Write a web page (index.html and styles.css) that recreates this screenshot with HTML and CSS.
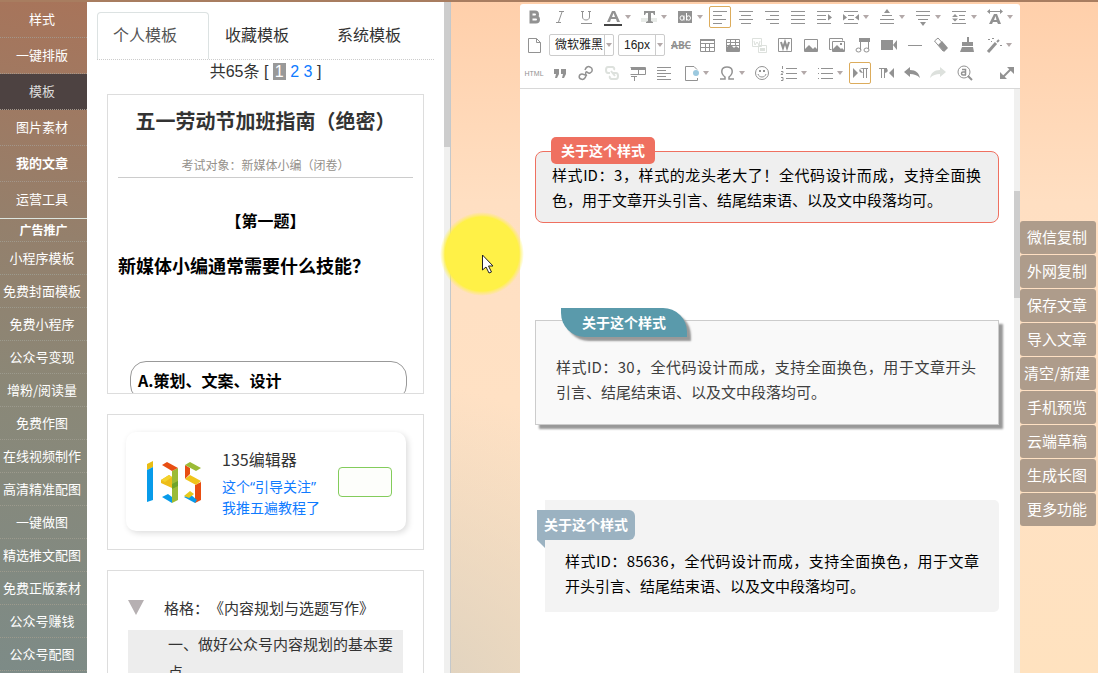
FILE: index.html
```html
<!DOCTYPE html>
<html lang="zh-CN">
<head>
  <meta charset="UTF-8">
  <meta name="viewport" content="width=device-width, initial-scale=1.0">
  <title>135编辑器</title>
  <link rel="stylesheet" href="styles.css">
</head>
<body>
  <div class="app">
    <nav class="sidebar">
      <ul class="menu">
        <li><a href="#">样式</a></li>
        <li><a href="#">一键排版</a></li>
        <li class="active"><a href="#">模板</a></li>
        <li><a href="#">图片素材</a></li>
        <li class="strong"><a href="#">我的文章</a></li>
        <li><a href="#">运营工具</a></li>
      </ul>
      <h2 class="promo-title">广告推广</h2>
      <ul class="promo">
        <li><a href="#">小程序模板</a></li>
        <li><a href="#">免费封面模板</a></li>
        <li><a href="#">免费小程序</a></li>
        <li><a href="#">公众号变现</a></li>
        <li><a href="#">增粉/阅读量</a></li>
        <li><a href="#">免费作图</a></li>
        <li><a href="#">在线视频制作</a></li>
        <li><a href="#">高清精准配图</a></li>
        <li><a href="#">一键做图</a></li>
        <li><a href="#">精选推文配图</a></li>
        <li><a href="#">免费正版素材</a></li>
        <li><a href="#">公众号赚钱</a></li>
        <li><a href="#">公众号配图</a></li>
      </ul>
    </nav>

    <section class="panel">
      <div class="panel-body">
        <div class="tabs">
          <a class="tab current" href="#">个人模板</a>
          <a class="tab" href="#">收藏模板</a>
          <a class="tab" href="#">系统模板</a>
        </div>
        <p class="pager">共65条 [ <span class="page-now">1</span> <a href="#">2</a> <a href="#">3</a> ]</p>

        <article class="card exam">
          <h1>五一劳动节加班指南（绝密）</h1>
          <p class="exam-sub">考试对象：新媒体小编（闭卷）</p>
          <p class="exam-no">【第一题】</p>
          <p class="exam-question">新媒体小编通常需要什么技能？</p>
          <p class="exam-option">A.策划、文案、设计</p>
        </article>

        <article class="card follow">
          <div class="follow-box">
            <svg class="logo" viewBox="0 0 56 44" aria-hidden="true">
              <path fill="#e9bd13" d="M1 4l6-3v6l-6 3z"/>
              <path fill="#079bea" d="M1 10l6-3v33l-6 2z"/>
              <path fill="#9bbb36" d="M26 11l6-3v32l-6 3z"/>
              <path fill="#e84e12" d="M16 5l5-3 11 6-6 3z"/>
              <path fill="#edbd18" d="M15 20l8-5 3 2v11l-11-5z"/>
              <path fill="#f3d22c" d="M15 20l8-5 3 2-7 5z"/>
              <path fill="#6fa329" d="M26 24l6-3v5l-6 3z"/>
              <path fill="#079bea" d="M16 37l6-3 4 3v6z"/>
              <path fill="#e84e12" d="M39 5l5 3v6l-5 5z"/>
              <path fill="#9bbb36" d="M39 5l5-3 11 6-5 3z"/>
              <path fill="#e84e12" d="M49 25l6-3v18l-6 3z"/>
              <path fill="#f0c41b" d="M39 19l5-4 11 6-5 4z"/>
              <path fill="#079bea" d="M38 37l6-3 7 6-2 3z"/>
              <path fill="#e5c91c" d="M38 36l6-5 4 3-5 4z"/>
            </svg>
            <div class="follow-text">
              <strong>135编辑器</strong>
              <a href="#">这个“引导关注”<br>我推五遍教程了</a>
            </div>
            <button class="follow-btn" type="button" aria-label="关注"></button>
          </div>
        </article>

        <article class="card outline">
          <h3>格格：《内容规划与选题写作》</h3>
          <p>一、做好公众号内容规划的基本要点</p>
        </article>
      </div>
      <div class="track"><div class="thumb thumb-panel"></div></div>
    </section>

    <main class="editor">
      <div class="toolbar">
        <div class="tool-row">
          <button class="tool" aria-label="加粗"><svg viewBox="0 0 18 18"><path class="bold" d="M6 4h4a2 2 0 010 5H6zM6 9h5a2 2 0 010 5H6z"/></svg></button>
          <button class="tool" aria-label="斜体"><svg viewBox="0 0 18 18"><path d="M8 3.500h5M5 14.500h5M11 4L7.500 14"/></svg></button>
          <button class="tool" aria-label="下划线"><svg viewBox="0 0 18 18"><path d="M4 3.500h3M11 3.500h3M5.500 4v5c0 4 7 4 7 0V4M4 15.500h11"/></svg></button>
          <button class="tool combo" aria-label="字体颜色"><svg viewBox="0 0 18 18"><path class="f" d="M3 14L8 3h3l5 11h-3l-1-3H7l-1 3zM8 9h3l-1.500-4z"/><path class="dark" d="M0 16h18v2H0z"/></svg></button>
          <button class="tool combo" aria-label="文字阴影"><svg viewBox="0 0 18 18"><path class="pale" d="M1 10h16v4H1z"/><path class="f" d="M4 3h11v4h-1l-1-2h-2v8l2 1v1H6v-1l2-1V5H6L5 7H4z"/></svg></button>
          <button class="tool combo" aria-label="背景色"><svg viewBox="0 0 18 18"><path class="f" d="M2 3h14v12H2z"/><path class="w" d="M8 7.500v5M8 10a1.800 2 0 10-4 0 1.800 2 0 004 0M10.500 5v7.500M10.500 10a1.800 2 0 104 0 1.800 2 0 00-4 0"/></svg></button>
          <button class="tool on" aria-label="左对齐"><svg viewBox="0 0 18 18"><path d="M2 3.500h14M2 7.500h9M2 11.500h13M2 15.500h9"/></svg></button>
          <button class="tool" aria-label="居中"><svg viewBox="0 0 18 18"><path d="M2 3.500h14M4 7.500h10M2 11.500h14M4 15.500h10"/></svg></button>
          <button class="tool" aria-label="右对齐"><svg viewBox="0 0 18 18"><path d="M2 3.500h14M7 7.500h9M3 11.500h13M7 15.500h9"/></svg></button>
          <button class="tool" aria-label="两端对齐"><svg viewBox="0 0 18 18"><path d="M2 3.500h14M2 7.500h14M2 11.500h14M2 15.500h14"/></svg></button>
          <button class="tool" aria-label="首行缩进"><svg viewBox="0 0 18 18"><path d="M2 3.500h14M2 7.500h9M2 11.500h9M2 15.500h14"/><path class="f" d="M13 6l4 3.500-4 3z"/></svg></button>
          <button class="tool combo" aria-label="两端缩进"><svg viewBox="0 0 18 18"><path d="M2 3.500h14M6 7.500h6M6 11.500h6M2 15.500h14"/><path class="f" d="M1 6l4 3.500-4 3zM17 6l-4 3.500 4 3z"/></svg></button>
          <button class="tool combo" aria-label="段前距"><svg viewBox="0 0 18 18"><path d="M4 7.500h10M2 11.500h14M2 15.500h14"/><path class="f" d="M6 5l3-4 3 4z"/></svg></button>
          <button class="tool combo" aria-label="段后距"><svg viewBox="0 0 18 18"><path d="M2 3.500h14M2 7.500h14M4 11.500h10"/><path class="f" d="M6 14l3 4 3-4z"/></svg></button>
          <button class="tool combo" aria-label="行间距"><svg viewBox="0 0 18 18"><path d="M2 3.500h14M9 7.500h6M9 11.500h6M2 15.500h14"/><path class="f" d="M2 9l3-3 3 3zM2 10.500l3 3 3-3z"/></svg></button>
          <button class="tool combo" aria-label="字间距"><svg viewBox="0 0 18 18"><path d="M3 3.500h12"/><path class="f" d="M4 1v5L1 3.500zM14 1v5l3-2.500zM3 16L8 6h3l4 10h-3l-1-2H7l-1 2zM8 12h2.500L9.500 8z"/></svg></button>
        </div>
        <div class="tool-row">
          <button class="tool" aria-label="新建"><svg viewBox="0 0 18 18"><path d="M3.500 2.500h8l4 4v10h-12zM11.500 2.500v4h4"/></svg></button>
          <span class="pick pick-font"><select aria-label="字体"><option>微软雅黑</option></select></span>
          <span class="pick pick-size"><select aria-label="字号"><option>16px</option></select></span>
          <button class="tool abc" aria-label="删除线">ABC</button>
          <button class="tool" aria-label="表格"><svg viewBox="0 0 18 18"><path d="M2.500 3.500h14v12h-14zM2 7.500h14M2 11.500h14M7.500 7v8M11.500 7v8"/><path class="f" d="M2 3h15v2H2z"/></svg></button>
          <button class="tool" aria-label="背景图"><svg viewBox="0 0 18 18"><path d="M2.500 3.500h13v12h-13zM2 6.500h14M2 9.500h14M6.500 3v7M11.500 3v7"/><path class="f" d="M2 15v-3l4-4 4 4 2-2 4 3v2z"/></svg></button>
          <button class="tool faded" aria-label="图片浮动"><svg viewBox="0 0 18 18"><path d="M2.500 2.500h9v8h-9zM4 5l1 4 2-3 2 3 1-4M8.500 9.500h8v7h-8z"/><path class="f" d="M10 12h5v3h-5z"/></svg></button>
          <button class="tool" aria-label="导入Word"><svg viewBox="0 0 18 18"><path d="M2.500 2.500h13v13h-13z"/><path class="l2" d="M5 6l2 6 2-6 2 6 2-6"/></svg></button>
          <button class="tool" aria-label="图片"><svg viewBox="0 0 18 18"><path d="M2.500 3.500h13v12h-13z"/><path class="f" d="M3 15v-2l4-4 4 4 2-2 3 3v1z"/></svg></button>
          <button class="tool" aria-label="多图"><svg viewBox="0 0 18 18"><path d="M3.500 13.500h-2v-11h13v2M4.500 5.500h12v10h-12z"/><path class="f" d="M5 15v-2l4-4 4 4 1-1 2 2v1zM12 7h2v2h-2z"/></svg></button>
          <button class="tool" aria-label="音乐"><svg viewBox="0 0 18 18"><path class="f" d="M5 2h11v4H5z"/><path d="M6.500 14V3M14.500 13V3"/><ellipse cx="4.500" cy="14" rx="2.500" ry="2"/><ellipse cx="12.500" cy="14" rx="2.500" ry="2"/></svg></button>
          <button class="tool" aria-label="视频"><svg viewBox="0 0 18 18"><path class="f" d="M1 4h12v10H1zM13 9l4-5v10z"/></svg></button>
          <button class="tool" aria-label="分隔线"><svg viewBox="0 0 18 18"><path d="M2 9.500h14"/></svg></button>
          <button class="tool" aria-label="清除格式"><svg viewBox="0 0 18 18"><path d="M2.500 5L6 2l9 10-4 3z"/><path class="f" d="M6 9l4-4 6 7-4 4z"/></svg></button>
          <button class="tool" aria-label="格式刷"><svg viewBox="0 0 18 18"><path class="f" d="M9 1h2v5h4v4H4V6h5zM4 11h11l1 5H2z"/></svg></button>
          <button class="tool combo" aria-label="自动排版"><svg viewBox="0 0 18 18"><path class="bold" d="M3 16L11 7"/><path class="l2" d="M12 6l2-2"/><path d="M3 3.500h2M7 2.500h2M6 5.500h1M15 9.500h2"/></svg></button>
        </div>
        <div class="tool-row">
          <button class="tool html" aria-label="源代码">HTML</button>
          <button class="tool" aria-label="引用"><svg viewBox="0 0 18 18"><path class="f" d="M3 5h5v5l-2 4H4l1-4H3zM10 5h5v5l-2 4h-2l1-4h-2z"/></svg></button>
          <button class="tool" aria-label="链接"><svg viewBox="0 0 18 18"><path class="l15" d="M9 12c-1 3-3 4-5 3-3-1-2-5 1-5 2 0 3 2 5 1M8 6c1-3 3-4 5-3 3 1 3 5 0 6-2 1-3-2-4-1-1 1 0 3 0 4"/></svg></button>
          <button class="tool faded" aria-label="取消链接"><svg viewBox="0 0 18 18"><path class="l2" d="M7 9H5a2 3 0 010-6h4a2 2 0 012 3M8 7l4 5M10 9h3a2 3 0 010 6H9a2 2 0 01-2-3"/></svg></button>
          <button class="tool" aria-label="标题表格"><svg viewBox="0 0 18 18"><path d="M1.500 3.500h15v7h-15M9.500 3v7M2 12.500h6M5.500 12v5"/><path class="f" d="M2 3h14v3H2z"/></svg></button>
          <button class="tool" aria-label="段落"><svg viewBox="0 0 18 18"><path d="M2 3.500h14M2 6.500h9M2 9.500h14M2 12.500h9M2 15.500h14"/></svg></button>
          <button class="tool combo" aria-label="插入"><svg viewBox="0 0 18 18"><path d="M12 2.500H3.500v14h12V14M12 2.500l3 3"/><circle class="blue" cx="14" cy="9" r="3"/></svg></button>
          <button class="tool combo" aria-label="特殊字符"><svg viewBox="0 0 18 18"><path class="l15" d="M2 15h5v-2C2 9 3 3 9 3s7 6 2 10v2h5"/></svg></button>
          <button class="tool" aria-label="表情"><svg viewBox="0 0 18 18"><circle cx="9" cy="9" r="6.500"/><path d="M5 10c1 4 7 4 8 0"/><path class="f" d="M6 6h2v2H6zM10 6h2v2h-2z"/></svg></button>
          <button class="tool combo" aria-label="有序列表"><svg viewBox="0 0 18 18"><path d="M6 4.500h11M6 9.500h11M6 14.500h11M2.500 2v3M1 7.500h2v1l-2 2h2M1 13.500h2v3H1"/></svg></button>
          <button class="tool combo" aria-label="无序列表"><svg viewBox="0 0 18 18"><path d="M5 4.500h12M5 9.500h12M5 14.500h12M2 4.500h1M2 9.500h1M2 14.500h1"/></svg></button>
          <button class="tool on" aria-label="从左到右"><svg viewBox="0 0 18 18"><path class="f" d="M2 4l5 5-5 5zM12 9c-5 0-5-5 0-5h5v1H9z"/><path d="M12.500 5v9M15.500 5v9"/></svg></button>
          <button class="tool" aria-label="从右到左"><svg viewBox="0 0 18 18"><path class="f" d="M17 4l-5 5 5 5zM7 4c5 0 5 5 0 5z"/><path d="M2 4.500h8M4.500 5v9M7.500 5v9"/></svg></button>
          <button class="tool" aria-label="撤销"><svg viewBox="0 0 18 18"><path class="f" d="M1 8l6-5v3c6 0 9 3 10 8-3-3-6-4-10-4v3z"/></svg></button>
          <button class="tool faded" aria-label="重做"><svg viewBox="0 0 18 18"><path class="f" d="M17 8l-6-5v3C5 6 2 9 1 14c3-3 6-4 10-4v3z"/></svg></button>
          <button class="tool" aria-label="查找替换"><svg viewBox="0 0 18 18"><circle cx="9" cy="8" r="6"/><path class="l2" d="M13 12l4 4"/><path class="l15" d="M7 5.500h3.500V11M10 8H8a1 1 0 000 3h3"/></svg></button>
          <button class="tool last" aria-label="全屏"><svg viewBox="0 0 18 18"><path class="l2" d="M5 13l8-8"/><path class="f" d="M9 3h7v7zM2 8v7h7z"/></svg></button>
        </div>
      </div>

      <div class="doc-wrap">
        <div class="doc">
          <section class="block block-red">
            <h4>关于这个样式</h4>
            <p>样式ID：3，样式的龙头老大了！全代码设计而成，支持全面换色，用于文章开头引言、结尾结束语、以及文中段落均可。</p>
          </section>
          <section class="block block-teal">
            <h4>关于这个样式</h4>
            <p>样式ID：30，全代码设计而成，支持全面换色，用于文章开头引言、结尾结束语、以及文中段落均可。</p>
          </section>
          <section class="block block-blue">
            <h4>关于这个样式</h4>
            <p>样式ID：85636，全代码设计而成，支持全面换色，用于文章开头引言、结尾结束语、以及文中段落均可。</p>
          </section>
        </div>
        <div class="track"><div class="thumb thumb-doc"></div></div>
      </div>
    </main>

    <aside class="actions">
      <button type="button">微信复制</button>
      <button type="button">外网复制</button>
      <button type="button">保存文章</button>
      <button type="button">导入文章</button>
      <button type="button">清空/新建</button>
      <button type="button">手机预览</button>
      <button type="button">云端草稿</button>
      <button type="button">生成长图</button>
      <button type="button">更多功能</button>
    </aside>
  </div>

  <!-- highlighted mouse pointer -->
  <div class="pointer">
    <svg viewBox="0 0 12 20" aria-hidden="true"><path fill="#fff" stroke="#222" d="M.500 1v15l3.500-3 3 6 2.500-1-3-6H11z"/></svg>
  </div>
</body>
</html>
```
FILE: styles.css
```css
* {
  box-sizing: border-box;
}
body {
  margin: 0;
  height: 100vh;
  overflow: hidden;
  font-family: "Noto Sans CJK SC", sans-serif;
  text-spacing-trim: space-all;
  color: #333;
  background:
    radial-gradient(circle at 35% 110%, #d8cfc0, rgba(216, 207, 192, 0) 35%),
    linear-gradient(#ffcfaa, #ffdfc2 30%, #ffe1c4 60%, #ffe2bf);
}
ul, h1, h2, h3, h4, p {
  margin: 0;
  padding: 0;
  list-style: none;
}
a {
  text-decoration: none;
  color: inherit;
}
button {
  font-family: inherit;
  padding: 0;
  border: 0;
  cursor: pointer;
}
.app {
  display: flex;
  height: 100%;
  border-top: 2px solid #a87d60;
}

/* left menu */
.sidebar {
  flex: 0 0 87px;
  overflow: hidden;
  padding-right: 1px;
  color: #fff;
  font-size: 13px;
  text-align: center;
  background: linear-gradient(190deg, #a8745a, #94806c 35%, #8a8878 60%, #7d8b87);
}
.sidebar ul, .promo-title {
  margin-right: -1px;
  padding-right: 0;
}
.sidebar a {
  display: block;
  padding-right: 3px;
  white-space: nowrap;
}
.menu {
  border-bottom: 1px solid #dde5de;
}
.menu li {
  height: 36px;
  line-height: 33px;
  border-bottom: 1px dotted #a3968a;
}
.menu li:last-child {
  border-bottom: 0;
}
.menu .active {
  color: #ddd;
  background: #4d4241;
}
.menu .strong {
  font-weight: bold;
}
.promo-title {
  height: 23px;
  line-height: 22px;
  font-size: 12px;
  border-bottom: 1px dotted #a09a8c;
}
.promo li {
  height: 33px;
  line-height: 31px;
  border-bottom: 1px dotted #9c9a8d;
}

/* scroll bars */
.track {
  flex: 0 0 6px;
  background: #f0f0ef;
}
.thumb {
  background: #cdcdcd;
}
.thumb-panel {
  height: 145px;
}
.thumb-doc {
  height: 107px;
  margin-top: 102px;
}

/* template panel */
.panel {
  flex: 0 0 364px;
  display: flex;
  background: #fff;
  border-right: 1px solid #c4c8cb;
}
.panel-body {
  flex: 1;
  overflow: hidden;
  padding: 10px 10px 0;
}
.tabs {
  display: flex;
  border-bottom: 1px dotted #ccc;
}
.tab {
  width: 112px;
  height: 47px;
  padding-left: 16px;
  font-size: 16px;
  line-height: 44px;
}
.tab.current {
  padding-left: 15px;
  color: #555;
  line-height: 42px;
  border: 1px solid #dce2e2;
  border-bottom: 0;
  border-radius: 4px 4px 0 0;
}
.pager {
  height: 34px;
  line-height: 24px;
  font-size: 16px;
  font-family: "Liberation Sans", "Noto Sans CJK SC", sans-serif;
  text-align: center;
}
.pager a {
  color: #0f7bff;
}
.page-now {
  padding: 0 2px;
  color: #fff;
  background: #999;
}
.card {
  margin: 0 10px 20px;
  border: 1px solid #ddd;
  overflow: hidden;
}
.exam {
  height: 300px;
  padding: 11px 10px 0;
  color: #000;
  font-weight: bold;
}
.exam h1 {
  font-size: 20px;
  line-height: 30px;
  color: #333;
  text-align: center;
}
.exam-sub {
  margin-top: 19px;
  padding-bottom: 2px;
  line-height: 20px;
  font-size: 12px;
  font-weight: normal;
  color: #94908a;
  text-align: center;
  border-bottom: 1px solid #ccc;
}
.exam-no {
  margin-top: 30px;
  font-size: 16px;
  line-height: 24px;
  text-align: center;
}
.exam-question {
  margin-top: 16px;
  font-size: 18px;
  line-height: 34px;
}
.exam-option {
  margin: 79px 6px 0 12px;
  padding: 5px 7px;
  height: 40px;
  font-size: 16px;
  line-height: 26px;
  border: 1px solid #999;
  border-radius: 16px;
}
.follow {
  padding: 17px 17px 18px 18px;
}
.follow-box {
  display: flex;
  align-items: center;
  height: 99px;
  padding: 0 14px 0 20px;
  border-radius: 10px;
  box-shadow: 2px 2px 6px rgba(0, 0, 0, 0.14);
}
.logo {
  width: 56px;
  height: 44px;
}
.follow-text {
  flex: 1;
  margin-left: 20px;
  padding-top: 4px;
  font-size: 14px;
  line-height: 21px;
}
.follow-text strong {
  display: block;
  margin-bottom: 6px;
  font-size: 16px;
  font-weight: normal;
}
.follow-text a {
  display: block;
  font-family: "Noto Sans", "Noto Sans CJK SC", sans-serif;
  color: #0f7bff;
  white-space: nowrap;
}
.follow-btn {
  width: 54px;
  height: 30px;
  background: #fdfefb;
  border: 1px solid #83cc5b;
  border-radius: 4px;
}
.outline {
  padding: 24px 20px 0;
  font-size: 15px;
}
.outline h3 {
  display: flex;
  align-items: center;
  height: 24px;
  font-size: 15px;
  font-weight: normal;
  white-space: nowrap;
}
.outline h3::before {
  content: '';
  margin-right: 20px;
  border: 8px solid transparent;
  border-top: 15px solid #b6b0b2;
  border-bottom: 0;
}
.outline p {
  margin-top: 11px;
  padding: 0 8px 20px 40px;
  line-height: 28px;
  background: #ededed;
}

/* editor */
.editor {
  flex: 1;
  display: flex;
  flex-direction: column;
  margin: 2px 0 0 69px;
  background: #fff;
  border-radius: 3px 3px 0 0;
}
.toolbar {
  padding-left: 1px;
  border-bottom: 1px solid #d8d8d8;
}
.tool-row {
  display: flex;
  align-items: center;
  height: 28px;
  padding-bottom: 2px;
}
.tool {
  flex: 0 0 26px;
  display: flex;
  align-items: center;
  justify-content: center;
  height: 22px;
  color: #929292;
  background: none;
}
.tool svg {
  flex: none;
  width: 18px;
  height: 18px;
  fill: none;
  stroke: currentColor;
}
.tool .f {
  fill: currentColor;
  fill-rule: evenodd;
  stroke: none;
}
.tool .w {
  stroke: #fff;
}
.tool .l15 {
  stroke-width: 1.5;
}
.tool .l2 {
  stroke-width: 2;
}
.tool .bold {
  stroke-width: 3;
}
.tool .dark {
  fill: #444;
  stroke: none;
}
.tool .pale {
  fill: #e8ebe8;
  stroke: none;
}
.tool .blue {
  fill: #9cc9df;
  stroke: none;
}
.tool.combo {
  flex-basis: 36px;
}
.tool.combo::after {
  content: '';
  margin-left: 3px;
  border: 3px solid transparent;
  border-top: 4px solid #b3a9a9;
  border-bottom: 0;
}
.tool.on {
  flex-basis: 22px;
  margin: 0 2px;
  border: 1px solid #dcac5c;
  border-radius: 2px;
}
.tool.faded {
  color: #dde1dd;
}
.tool.last {
  margin-left: auto;
}
.abc {
  font-family: "Open Sans", sans-serif;
  font-size: 10px;
  font-weight: bold;
  text-decoration: line-through;
}
.html {
  font-family: "Liberation Sans", sans-serif;
  font-size: 7px;
}
.pick {
  position: relative;
  height: 22px;
  border: 1px solid #ccc;
  border-radius: 2px;
}
.pick-font {
  width: 65px;
  margin: 0 4px 0 2px;
}
.pick-size {
  width: 47px;
  margin-right: 3px;
}
.pick select {
  display: block;
  width: 100%;
  height: 20px;
  padding: 0 0 0 5px;
  border: 0;
  background: none;
  appearance: none;
  font-family: "Liberation Sans", "Noto Sans CJK SC", sans-serif;
  font-size: 12px;
  color: #222;
}
.pick::before {
  content: '';
  position: absolute;
  top: 0;
  right: 8px;
  height: 20px;
  border-left: 1px solid #ccc;
}
.pick::after {
  content: '';
  position: absolute;
  top: 8px;
  right: 1px;
  border: 3px solid transparent;
  border-top: 4px solid #b3a9a9;
  border-bottom: 0;
}

/* document */
.doc-wrap {
  flex: 1;
  display: flex;
  min-height: 0;
}
.doc {
  flex: 1;
  overflow: hidden;
  padding: 62px 15px 0;
}
.block {
  font-size: 15px;
  line-height: 25px;
}
.block p {
  text-align: justify;
}
.block h4 {
  width: fit-content;
  font-size: 14px;
  color: #fff;
  white-space: nowrap;
}
.block-red {
  padding: 0 17px 10px 16px;
  color: #000;
  background: #efefef;
  border: 1px solid #ef7060;
  border-radius: 8px;
}
.block-red h4 {
  margin: -15px 0 0 -1px;
  padding: 1px 10px;
  background: #ef7060;
  border-radius: 5px;
}
.block-red p {
  margin-top: -2px;
}
.block-teal {
  margin-top: 97px;
  padding: 0 22px 20px 20px;
  color: #3f3f3f;
  background: #f9f9f9;
  border: 1px solid #ccc;
  box-shadow: 4px 4px 2px #999;
}
.block-teal h4 {
  margin: -13px 0 17px 5px;
  padding: 2px 21px;
  background: #5a9aab;
  border-radius: 0 24px 0 24px;
  box-shadow: 4px 4px 2px #999;
}
.block-blue {
  margin: 75px 0 0 10px;
  padding: 10px 20px 14px;
  color: #000;
  background: #f3f3f3;
  border-radius: 0 5px 5px 0;
}
.block-blue h4 {
  position: relative;
  margin: 0 0 8px -28px;
  padding: 2px 7px 3px;
  background: #9bb2c1;
  border-radius: 0 6px 6px 0;
}
.block-blue h4::after {
  content: '';
  position: absolute;
  top: 100%;
  left: 0;
  border-top: 8px solid #9bb2c1;
  border-left: 8px solid transparent;
}

/* right buttons */
.actions {
  flex: 0 0 76px;
  display: flex;
  flex-direction: column;
  gap: 1px;
  margin: 219px 2px 0 0;
}
.actions button {
  height: 33px;
  padding: 0 2px 2px 0;
  font-size: 15px;
  color: #fff;
  white-space: nowrap;
  background: #ae9c8b;
  border-radius: 3px;
}

.pointer {
  position: absolute;
  top: 212px;
  left: 440px;
  width: 84px;
  height: 84px;
  padding: 42px 0 0 42px;
  border-radius: 50%;
  background: radial-gradient(circle closest-side, #fff147 88%, rgba(255, 241, 71, 0.6) 92%, rgba(255, 241, 71, 0));
}
.pointer svg {
  display: block;
  width: 12px;
  height: 20px;
}
```
